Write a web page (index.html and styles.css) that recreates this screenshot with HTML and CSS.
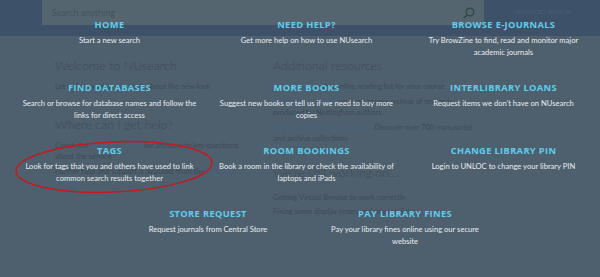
FILE: index.html
```html
<!DOCTYPE html>
<html lang="en">

<head>
    <meta charset="UTF-8">
    <meta name="viewport" content="width=device-width, initial-scale=1.0">
    <title>NUsearch</title>
    <link rel="stylesheet" href="styles.css">
</head>

<body>
    <div class="page">
        <header class="topbar">
            <div class="search-box">
                <span class="placeholder">Search anything</span>
                <svg class="search-icon" width="12" height="12" viewBox="0 0 12 12">
                    <circle cx="7" cy="5" r="3.8" fill="none" stroke="#2c4a46" stroke-width="1.4" />
                    <line x1="4.2" y1="7.8" x2="0.8" y2="11.2" stroke="#2c4a46" stroke-width="1.6" />
                </svg>
            </div>
            <div class="advanced">ADVANCED SEARCH</div>
        </header>

        <main class="content">
            <section class="col col-left">
                <h3>Welcome to NUsearch</h3>
                <p>Let us know what you think about the new look</p>
                <h3 class="next">Where can I get help?</h3>
                <p>Check the <a href="#">NUsearch FAQs</a> for answers to key questions about the service</p>
                <p>Further help and support is available from the <a href="#">Libraries website</a></p>
            </section>
            <section class="col col-right">
                <h3>Additional resources</h3>
                <p><a href="#">Reading Lists</a> - the online reading list for your course</p>
                <p><a href="#">Nottingham ePrints</a> an open access archive of research produced by Nottingham authors</p>
                <p><a href="#">Manuscripts Online Catalogue</a> Discover over 700 manuscript and archive collections</p>
                <h3 class="next">We're still working on...</h3>
                <p>Getting Virtual Browse to work correctly</p>
                <p>Fixing some display errors and missing links</p>
            </section>
        </main>
    </div>

    <div class="overlay">
        <div class="menu-grid">
            <div class="menu-item">
                <h4>HOME</h4>
                <p>Start a new search</p>
            </div>
            <div class="menu-item">
                <h4>NEED HELP?</h4>
                <p>Get more help on how to use NUsearch</p>
            </div>
            <div class="menu-item">
                <h4>BROWSE E-JOURNALS</h4>
                <p>Try BrowZine to find, read and monitor major academic journals</p>
            </div>
            <div class="menu-item">
                <h4>FIND DATABASES</h4>
                <p>Search or browse for database names and follow the links for direct access</p>
            </div>
            <div class="menu-item">
                <h4>MORE BOOKS</h4>
                <p>Suggest new books or tell us if we need to buy more copies</p>
            </div>
            <div class="menu-item">
                <h4>INTERLIBRARY LOANS</h4>
                <p>Request items we don't have on NUsearch</p>
            </div>
            <div class="menu-item">
                <h4>TAGS</h4>
                <p>Look for tags that you and others have used to link common search results together</p>
            </div>
            <div class="menu-item">
                <h4>ROOM BOOKINGS</h4>
                <p>Book a room in the library or check the availability of laptops and iPads</p>
            </div>
            <div class="menu-item">
                <h4>CHANGE LIBRARY PIN</h4>
                <p>Login to UNLOC to change your library PIN</p>
            </div>
        </div>
        <div class="menu-last">
            <div class="menu-item">
                <h4>STORE REQUEST</h4>
                <p>Request journals from Central Store</p>
            </div>
            <div class="menu-item">
                <h4>PAY LIBRARY FINES</h4>
                <p>Pay your library fines online using our secure website</p>
            </div>
        </div>

        <svg class="annotation" width="210" height="64" viewBox="0 0 210 64">
            <ellipse cx="105" cy="32" rx="98" ry="25" fill="none" stroke="#c8181e" stroke-width="1.5" transform="rotate(-2.5 105 32)" />
        </svg>
    </div>
</body>

</html>
```

FILE: styles.css
```css
body {
    margin: 0;
    padding: 0;
    width: 600px;
    height: 277px;
    overflow: hidden;
    background-color: #4e5f6e;
    font-family: Lato, "Open Sans", sans-serif;
    position: relative;
}

/* dimmed page behind the menu */

.topbar {
    height: 36px;
    background-color: #3d5168;
    display: flex;
    align-items: flex-start;
    padding-left: 42px;
}

.search-box {
    flex: 1;
    height: 25px;
    background-color: #55656f;
    display: flex;
    align-items: center;
    justify-content: space-between;
    padding: 0 9px 0 10px;
}

.placeholder {
    color: #44535d;
    font-size: 9px;
}

.search-icon {
    display: block;
}

.advanced {
    width: 116px;
    height: 25px;
    line-height: 25px;
    text-align: center;
    font-size: 5.5px;
    letter-spacing: 0.2px;
    color: #4c6078;
}

.content {
    display: flex;
    padding: 22px 0 0 55px;
    gap: 18px;
}

.col h3 {
    margin: 0 0 8px;
    font-size: 12.5px;
    line-height: 15px;
    font-weight: 300;
    color: #3e4c58;
}

.col p {
    margin: 0 0 3px;
    font-size: 7.5px;
    line-height: 11.5px;
    color: #3e4c58;
}

.col a {
    color: #47627f;
    text-decoration: none;
}

.col-left {
    width: 200px;
}

.col-left .next {
    margin-top: 24px;
}

.col-right {
    width: 205px;
}

.col-right .next {
    margin: 20px 0 12px;
}

/* menu overlay */

.overlay {
    position: absolute;
    top: 0;
    left: 0;
    width: 600px;
    height: 277px;
    padding: 19px 0 0 11px;
    box-sizing: border-box;
}

.menu-grid {
    display: grid;
    grid-template-columns: repeat(3, 197px);
    grid-auto-rows: 63px;
}

.menu-last {
    display: flex;
    justify-content: center;
    width: 591px;
}

.menu-last .menu-item {
    width: 197px;
}

.menu-item {
    text-align: center;
    padding: 0 11px;
    box-sizing: border-box;
}

.menu-item h4 {
    margin: 0 0 4px;
    font-family: "Open Sans", sans-serif;
    font-weight: 700;
    font-size: 9.3px;
    line-height: 12px;
    letter-spacing: 0.35px;
    color: #5fcdea;
}

.menu-item p {
    margin: 0;
    font-size: 7.6px;
    line-height: 11.7px;
    color: #e9edf0;
}

.annotation {
    position: absolute;
    left: 9px;
    top: 135px;
}
```
